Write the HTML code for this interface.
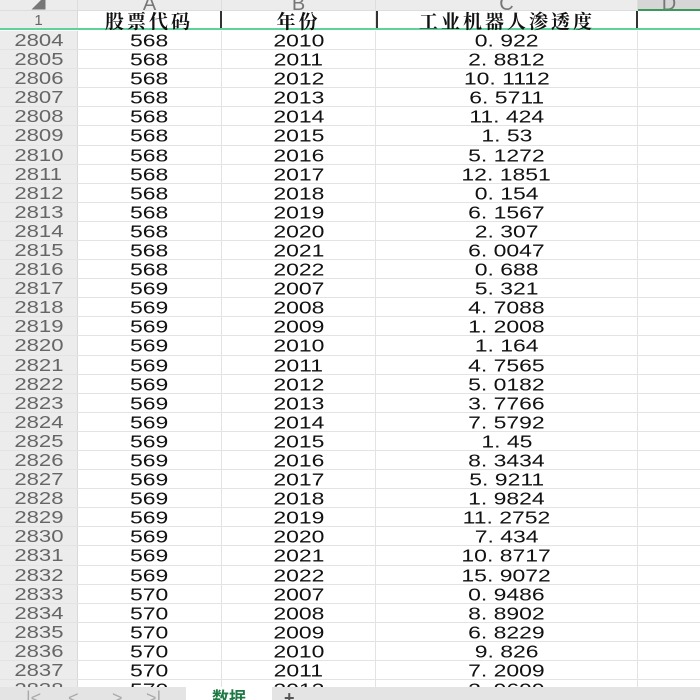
<!DOCTYPE html>
<html><head><meta charset="utf-8"><style>
*{margin:0;padding:0;box-sizing:border-box}
body{width:700px;height:700px;overflow:hidden;background:#fff;position:relative;font-family:"Liberation Sans","Noto Sans CJK SC",sans-serif}
.colh{position:absolute;top:0;height:11px;background:#ececec;border-bottom:1px solid #ddd;overflow:hidden;color:#777;font-size:20px;text-align:center;line-height:8px}
.r{position:absolute;left:0;width:700px;height:19.09px;border-bottom:1px solid #e3e3e3}
.r div{position:absolute;top:0;height:100%;text-align:center;line-height:19px;font-size:17px;color:#111}
.r .n{left:0;width:78px;background:#ececec;color:#666;border-right:1px solid #d8d8d8}
.r .n span{transform:scale(1.3,1.02)}
.r .a{left:78px;width:144px;border-right:1px solid #e3e3e3}
.r .b{left:222px;width:154px;border-right:1px solid #e3e3e3}
.r .c{left:376px;width:262px;border-right:1px solid #e3e3e3}
.r span{display:inline-block;transform:scale(1.35,1.05)}
.hd div{font-weight:bold;font-size:19px;font-family:"Noto Serif CJK SC","Noto Sans CJK SC",serif;letter-spacing:3px}
</style></head><body>
<div class="colh" style="left:0;width:78px;border-right:1px solid #ddd;font-size:14px;line-height:6px">◢</div>
<div class="colh" style="left:78px;width:144px;border-right:1px solid #ddd">A</div>
<div class="colh" style="left:222px;width:154px;border-right:1px solid #ddd">B</div>
<div class="colh" style="left:376px;width:262px;border-right:1px solid #ddd">C</div>
<div class="colh" style="left:638px;width:62px;background:#d6d6d6;border-bottom:2px solid #3a9a5a">D</div>
<div class="r hd" style="top:11px;height:19px;border-bottom:2px solid #5fd19a">
<div class="n" style="font-family:'Liberation Sans';font-weight:normal;font-size:15px;letter-spacing:0">1</div>
<div class="a" style="border-right:2px solid #333">股票代码</div>
<div class="b">年份</div>
<div class="c" style="border-left:2px solid #333;border-right:2px solid #333">工业机器人渗透度</div>
</div>
<div style="position:absolute;top:31px;left:0;width:700px">
<div class="r" style="top:0px"><div class="n"><span>2804</span></div><div class="a"><span>568</span></div><div class="b"><span>2010</span></div><div class="c"><span>0. 922</span></div></div>
<div class="r" style="top:19.09px"><div class="n"><span>2805</span></div><div class="a"><span>568</span></div><div class="b"><span>2011</span></div><div class="c"><span>2. 8812</span></div></div>
<div class="r" style="top:38.18px"><div class="n"><span>2806</span></div><div class="a"><span>568</span></div><div class="b"><span>2012</span></div><div class="c"><span>10. 1112</span></div></div>
<div class="r" style="top:57.27px"><div class="n"><span>2807</span></div><div class="a"><span>568</span></div><div class="b"><span>2013</span></div><div class="c"><span>6. 5711</span></div></div>
<div class="r" style="top:76.36px"><div class="n"><span>2808</span></div><div class="a"><span>568</span></div><div class="b"><span>2014</span></div><div class="c"><span>11. 424</span></div></div>
<div class="r" style="top:95.45px"><div class="n"><span>2809</span></div><div class="a"><span>568</span></div><div class="b"><span>2015</span></div><div class="c"><span>1. 53</span></div></div>
<div class="r" style="top:114.54px"><div class="n"><span>2810</span></div><div class="a"><span>568</span></div><div class="b"><span>2016</span></div><div class="c"><span>5. 1272</span></div></div>
<div class="r" style="top:133.63px"><div class="n"><span>2811</span></div><div class="a"><span>568</span></div><div class="b"><span>2017</span></div><div class="c"><span>12. 1851</span></div></div>
<div class="r" style="top:152.72px"><div class="n"><span>2812</span></div><div class="a"><span>568</span></div><div class="b"><span>2018</span></div><div class="c"><span>0. 154</span></div></div>
<div class="r" style="top:171.81px"><div class="n"><span>2813</span></div><div class="a"><span>568</span></div><div class="b"><span>2019</span></div><div class="c"><span>6. 1567</span></div></div>
<div class="r" style="top:190.9px"><div class="n"><span>2814</span></div><div class="a"><span>568</span></div><div class="b"><span>2020</span></div><div class="c"><span>2. 307</span></div></div>
<div class="r" style="top:209.99px"><div class="n"><span>2815</span></div><div class="a"><span>568</span></div><div class="b"><span>2021</span></div><div class="c"><span>6. 0047</span></div></div>
<div class="r" style="top:229.08px"><div class="n"><span>2816</span></div><div class="a"><span>568</span></div><div class="b"><span>2022</span></div><div class="c"><span>0. 688</span></div></div>
<div class="r" style="top:248.17px"><div class="n"><span>2817</span></div><div class="a"><span>569</span></div><div class="b"><span>2007</span></div><div class="c"><span>5. 321</span></div></div>
<div class="r" style="top:267.26px"><div class="n"><span>2818</span></div><div class="a"><span>569</span></div><div class="b"><span>2008</span></div><div class="c"><span>4. 7088</span></div></div>
<div class="r" style="top:286.35px"><div class="n"><span>2819</span></div><div class="a"><span>569</span></div><div class="b"><span>2009</span></div><div class="c"><span>1. 2008</span></div></div>
<div class="r" style="top:305.44px"><div class="n"><span>2820</span></div><div class="a"><span>569</span></div><div class="b"><span>2010</span></div><div class="c"><span>1. 164</span></div></div>
<div class="r" style="top:324.53px"><div class="n"><span>2821</span></div><div class="a"><span>569</span></div><div class="b"><span>2011</span></div><div class="c"><span>4. 7565</span></div></div>
<div class="r" style="top:343.62px"><div class="n"><span>2822</span></div><div class="a"><span>569</span></div><div class="b"><span>2012</span></div><div class="c"><span>5. 0182</span></div></div>
<div class="r" style="top:362.71px"><div class="n"><span>2823</span></div><div class="a"><span>569</span></div><div class="b"><span>2013</span></div><div class="c"><span>3. 7766</span></div></div>
<div class="r" style="top:381.8px"><div class="n"><span>2824</span></div><div class="a"><span>569</span></div><div class="b"><span>2014</span></div><div class="c"><span>7. 5792</span></div></div>
<div class="r" style="top:400.89px"><div class="n"><span>2825</span></div><div class="a"><span>569</span></div><div class="b"><span>2015</span></div><div class="c"><span>1. 45</span></div></div>
<div class="r" style="top:419.98px"><div class="n"><span>2826</span></div><div class="a"><span>569</span></div><div class="b"><span>2016</span></div><div class="c"><span>8. 3434</span></div></div>
<div class="r" style="top:439.07px"><div class="n"><span>2827</span></div><div class="a"><span>569</span></div><div class="b"><span>2017</span></div><div class="c"><span>5. 9211</span></div></div>
<div class="r" style="top:458.16px"><div class="n"><span>2828</span></div><div class="a"><span>569</span></div><div class="b"><span>2018</span></div><div class="c"><span>1. 9824</span></div></div>
<div class="r" style="top:477.25px"><div class="n"><span>2829</span></div><div class="a"><span>569</span></div><div class="b"><span>2019</span></div><div class="c"><span>11. 2752</span></div></div>
<div class="r" style="top:496.34px"><div class="n"><span>2830</span></div><div class="a"><span>569</span></div><div class="b"><span>2020</span></div><div class="c"><span>7. 434</span></div></div>
<div class="r" style="top:515.43px"><div class="n"><span>2831</span></div><div class="a"><span>569</span></div><div class="b"><span>2021</span></div><div class="c"><span>10. 8717</span></div></div>
<div class="r" style="top:534.52px"><div class="n"><span>2832</span></div><div class="a"><span>569</span></div><div class="b"><span>2022</span></div><div class="c"><span>15. 9072</span></div></div>
<div class="r" style="top:553.61px"><div class="n"><span>2833</span></div><div class="a"><span>570</span></div><div class="b"><span>2007</span></div><div class="c"><span>0. 9486</span></div></div>
<div class="r" style="top:572.7px"><div class="n"><span>2834</span></div><div class="a"><span>570</span></div><div class="b"><span>2008</span></div><div class="c"><span>8. 8902</span></div></div>
<div class="r" style="top:591.79px"><div class="n"><span>2835</span></div><div class="a"><span>570</span></div><div class="b"><span>2009</span></div><div class="c"><span>6. 8229</span></div></div>
<div class="r" style="top:610.88px"><div class="n"><span>2836</span></div><div class="a"><span>570</span></div><div class="b"><span>2010</span></div><div class="c"><span>9. 826</span></div></div>
<div class="r" style="top:629.97px"><div class="n"><span>2837</span></div><div class="a"><span>570</span></div><div class="b"><span>2011</span></div><div class="c"><span>7. 2009</span></div></div>
<div class="r" style="top:649.06px"><div class="n"><span>2838</span></div><div class="a"><span>570</span></div><div class="b"><span>2012</span></div><div class="c"><span>2. 9699</span></div></div>
</div>
<div style="position:absolute;left:0;top:687px;width:700px;height:13px;background:#e4e4e4;overflow:hidden;color:#aaa;font-size:18px;line-height:22px">
<span style="position:absolute;left:26px">|&lt;</span><span style="position:absolute;left:68px">&lt;</span><span style="position:absolute;left:112px">&gt;</span><span style="position:absolute;left:146px">&gt;|</span>
<div style="position:absolute;left:186px;top:0;width:86px;height:13px;background:#fff;color:#1e7a45;font-weight:bold;text-align:center;font-size:17px;line-height:24px">数据</div>
<span style="position:absolute;left:284px;color:#555;font-weight:bold">+</span>
</div>
</body></html>
